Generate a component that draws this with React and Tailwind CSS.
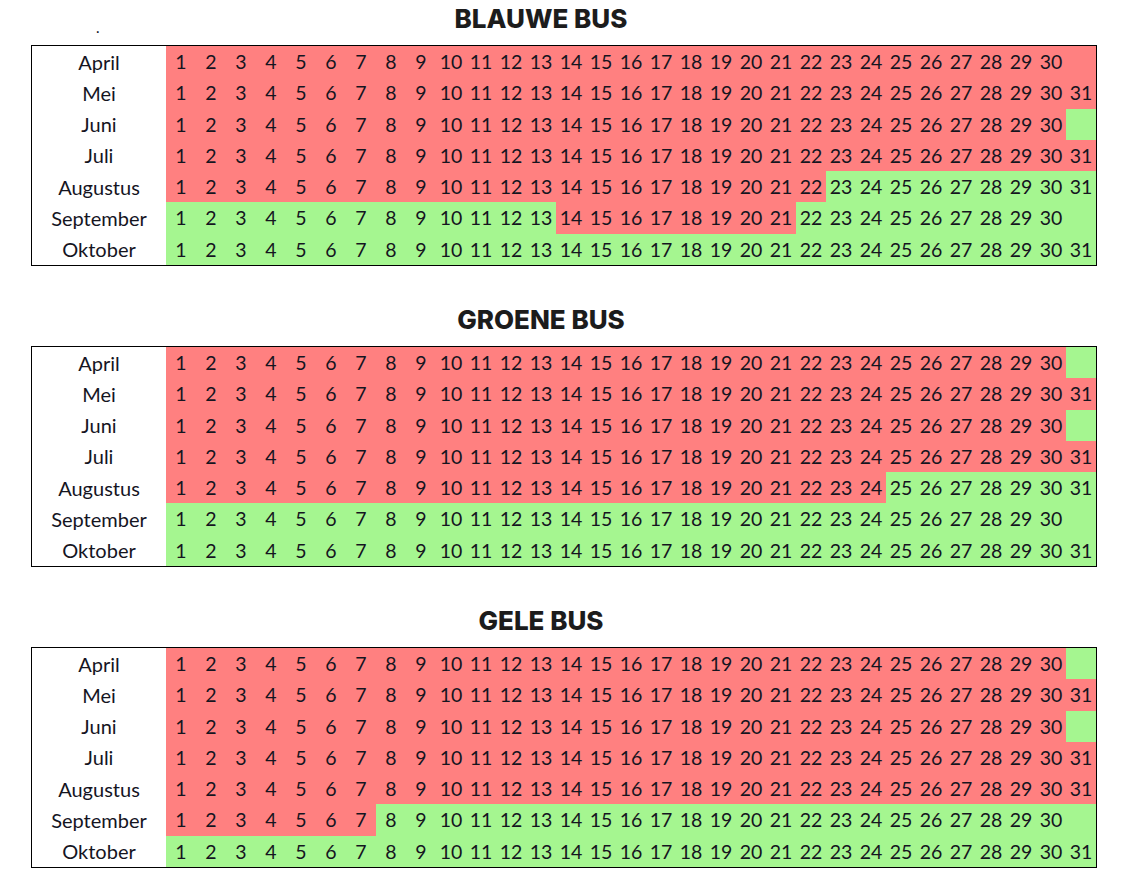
import React from 'react'

const months = [
    { name: 'April', days: 30 },
    { name: 'Mei', days: 31 },
    { name: 'Juni', days: 30 },
    { name: 'Juli', days: 31 },
    { name: 'Augustus', days: 31 },
    { name: 'September', days: 30 },
    { name: 'Oktober', days: 31 },
]

// red ranges per month, everything else is green
const buses = [
    {
        title: 'BLAUWE BUS',
        dot: true,
        red: [[[1, 31]], [[1, 31]], [[1, 30]], [[1, 31]], [[1, 22]], [[14, 21]], []],
    },
    {
        title: 'GROENE BUS',
        red: [[[1, 30]], [[1, 31]], [[1, 30]], [[1, 31]], [[1, 24]], [], []],
    },
    {
        title: 'GELE BUS',
        red: [[[1, 30]], [[1, 31]], [[1, 30]], [[1, 31]], [[1, 31]], [[1, 7]], []],
    },
]

const days = Array.from({ length: 31 }, (_, i) => i + 1)

function isRed(ranges, d) {
    return ranges.some(([a, b]) => d >= a && d <= b)
}

function BusTable({ bus }) {
    return (
        <div className="pb-[35px]">
            <div className="relative h-[45px] pr-[48px] text-center">
                {bus.dot && (
                    <span className="absolute left-[96px] top-[20px] text-[15px] leading-[15px]">.</span>
                )}
                <h2
                    className="pt-[1px] text-[26px] leading-[36px] font-extrabold text-[#1c1c1c]"
                    style={{ fontFamily: 'Inter, "Liberation Sans", sans-serif' }}
                >
                    {bus.title}
                </h2>
            </div>
            <div className="ml-[31px] w-[1066px] h-[221px] border border-black grid grid-rows-7">
                {months.map((m, mi) => (
                    <div key={m.name} className="flex">
                        <div className="w-[134px] bg-white flex items-center justify-center text-[20px]">
                            {m.name}
                        </div>
                        {days.map((d) => (
                            <div
                                key={d}
                                className={`w-[30px] flex items-center justify-center ${isRed(bus.red[mi], d) ? 'bg-[#ff8080]' : 'bg-[#a5f690]'}`}
                            >
                                {d <= m.days ? d : ''}
                            </div>
                        ))}
                    </div>
                ))}
            </div>
        </div>
    )
}

export default function App() {
    return (
        <div
            className="w-[1130px] min-h-[877px] bg-white text-[19.5px] text-[#15151f]"
            style={{ fontFamily: 'Lato, "Noto Sans", sans-serif' }}
        >
            {buses.map((bus) => (
                <BusTable key={bus.title} bus={bus} />
            ))}
        </div>
    )
}
